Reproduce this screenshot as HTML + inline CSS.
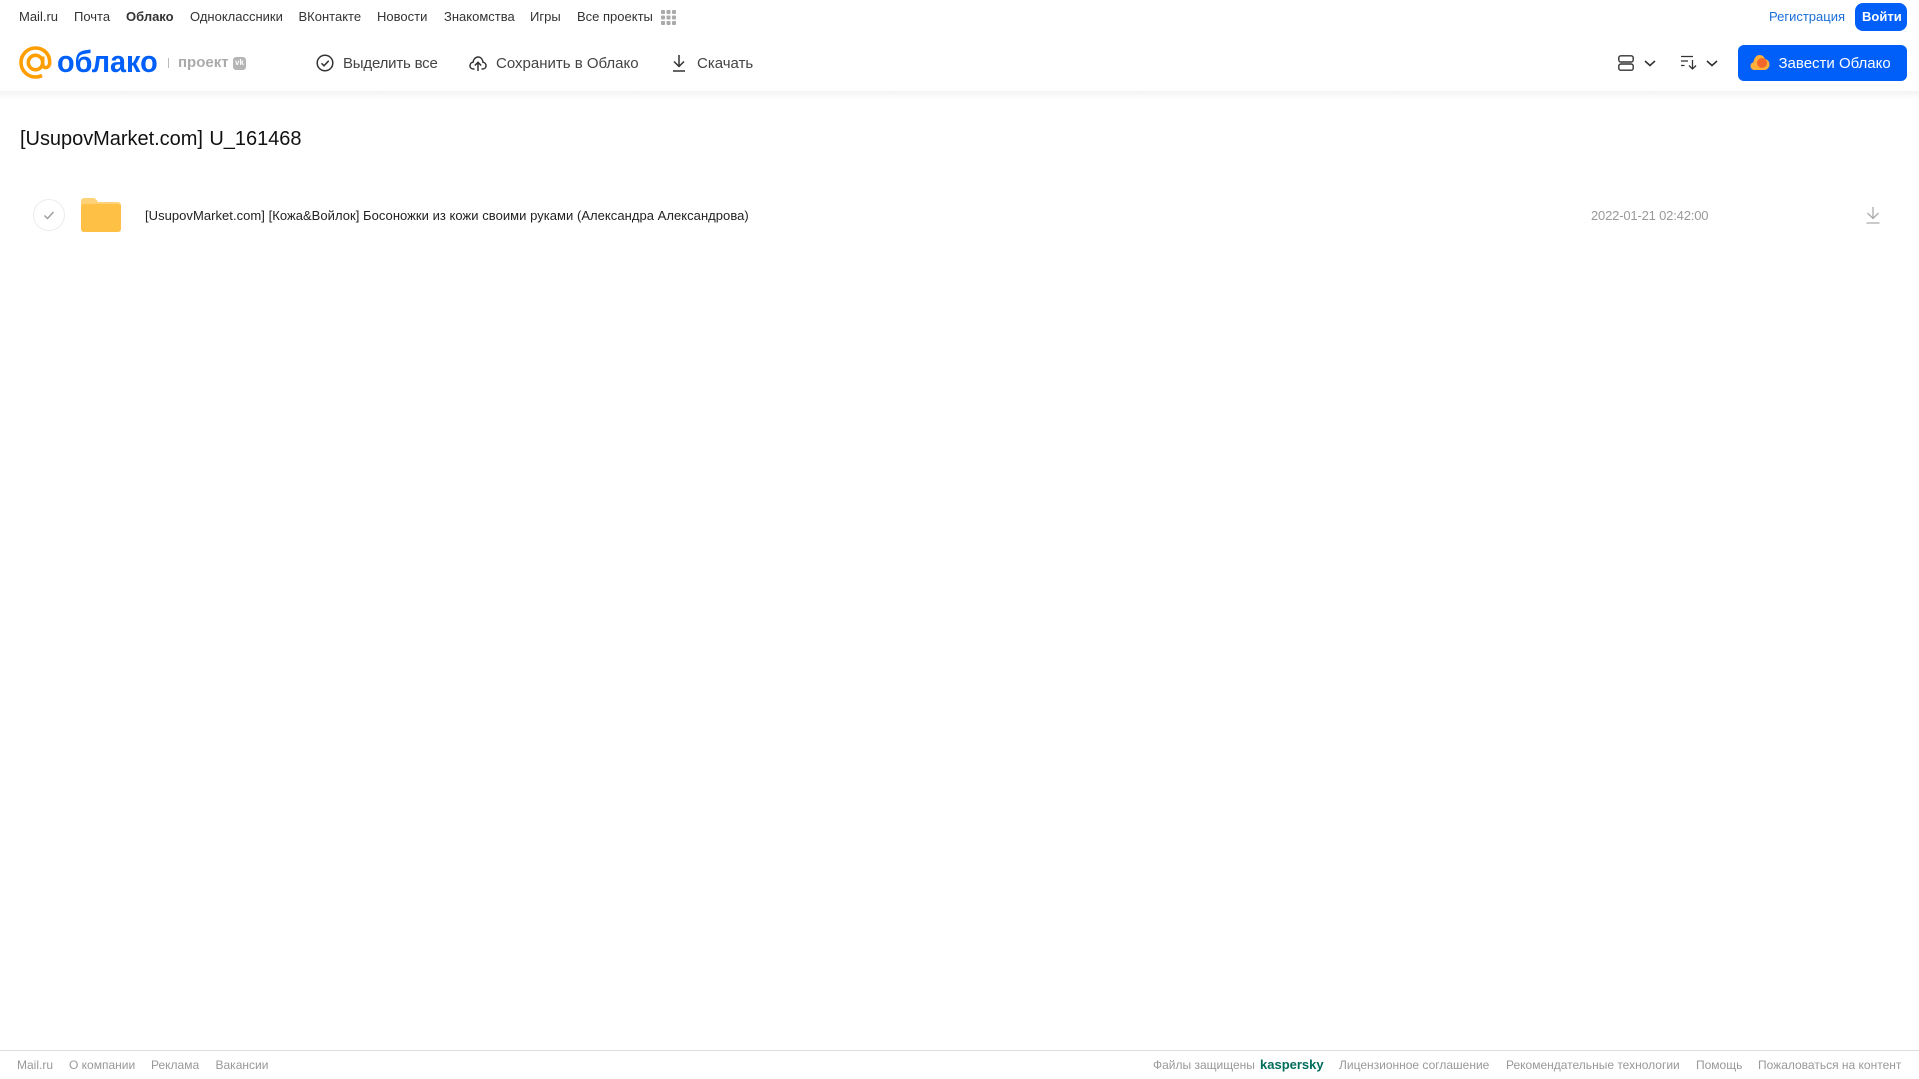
<!DOCTYPE html>
<html lang="ru"><head><meta charset="utf-8"><title>Облако</title>
<style>
html,body{margin:0;padding:0;background:#fff;width:1919px;height:1079px;overflow:hidden}
body{font-family:"Liberation Sans",Arial,sans-serif;position:relative;color:#2c2d2e}
.t{position:absolute;white-space:nowrap;line-height:20px}
.n{top:7px;font-size:13px;color:#333}
.a{top:54px;font-size:15px;color:#444}
.f{top:1055px;font-size:12px;color:#999}
svg{position:absolute;overflow:visible}
#hs{position:absolute;left:0;top:91px;width:1919px;height:8px;background:linear-gradient(#f3f3f3,#fff)}
</style></head><body>
<div id="hs"></div>
<span class="t n" style="left:19px">Mail.ru</span>
<span class="t n" style="left:74px">Почта</span>
<span class="t n" style="left:126px;font-weight:bold">Облако</span>
<span class="t n" style="left:190px">Одноклассники</span>
<span class="t n" style="left:298.500px">ВКонтакте</span>
<span class="t n" style="left:377px">Новости</span>
<span class="t n" style="left:444px">Знакомства</span>
<span class="t n" style="left:530px">Игры</span>
<span class="t n" style="left:577px">Все проекты</span>
<svg style="left:661px;top:10px" width="15" height="15" fill="#aaa"><rect width="4" height="4" rx="1"/><rect x="5.500" width="4" height="4" rx="1"/><rect x="11" width="4" height="4" rx="1"/><rect y="5.500" width="4" height="4" rx="1"/><rect x="5.500" y="5.500" width="4" height="4" rx="1"/><rect x="11" y="5.500" width="4" height="4" rx="1"/><rect y="11" width="4" height="4" rx="1"/><rect x="5.500" y="11" width="4" height="4" rx="1"/><rect x="11" y="11" width="4" height="4" rx="1"/></svg>
<span class="t n" style="left:1769px;color:#1a6ed8">Регистрация</span>
<div style="position:absolute;left:1855px;top:3px;width:52px;height:28px;border-radius:8px;background:#005ff9"></div>
<span class="t n" style="left:1862px;color:#fff;font-weight:bold;font-size:13px">Войти</span>

<svg style="left:19px;top:46px" width="33" height="33" viewBox="0 0 33 33" fill="none" stroke="#ff9e00" stroke-width="3.600"><circle cx="16.500" cy="16.500" r="7.200"/><path d="M23.700 10.500V18c0 5 6.800 5 7-1.500C30.900 8 24.500 2 16.500 2 8.500 2 2 8.500 2 16.500S8.500 31 16.500 31c2.500 0 4.500-.5 6.500-1.500"/></svg>
<span class="t" style="left:57px;top:46px;line-height:32px;font-size:31px;font-weight:bold;color:#005ff9;transform:scaleX(.93);transform-origin:0 50%">облако</span>
<div style="position:absolute;left:168px;top:58px;width:1px;height:10px;background:#bbb"></div>
<span class="t" style="left:178px;top:53px;font-size:15px;font-weight:bold;color:#aaa">проект</span>
<div style="position:absolute;left:233px;top:57px;width:13px;height:13px;border-radius:3px;background:#b5b5b5"></div>
<span class="t" style="left:235px;top:53px;font-size:8px;font-weight:bold;color:#fff">vk</span>

<svg style="left:316px;top:54px" width="18" height="18" fill="none" stroke="#333" stroke-width="1.500"><circle cx="9" cy="9" r="7.800"/><path d="M5.500 9.300l2.500 2.500 4.700-5"/></svg>
<span class="t a" style="left:343px;letter-spacing:-.2px">Выделить все</span>
<svg style="left:469px;top:54px" width="18" height="18" viewBox="0 0 18 18" fill="none" stroke="#333" stroke-width="1.500"><path d="M5.500 15H4.500C2.300 15 1 13.500 1 11.700c0-1.800 1.300-3.200 3-3.400C4.500 5.300 6.500 3 9 3c2.700 0 4.600 2.200 5 5.300 1.800.2 3 1.700 3 3.400 0 1.800-1.300 3.300-3.500 3.300h-1"/><path d="M9 17V8.500M5.800 11.500L9 8.300l3.200 3.200"/></svg>
<span class="t a" style="left:496px">Сохранить в Облако</span>
<svg style="left:672px;top:54px" width="14" height="18" viewBox="0 0 14 18" fill="none" stroke="#333" stroke-width="1.500"><path d="M7 1v11M2 7.500L7 12.500l5-5M1 17h12"/></svg>
<span class="t a" style="left:697px">Скачать</span>

<svg style="left:1618px;top:55px" width="16" height="16" fill="none" stroke="#333" stroke-width="1.400"><rect x=".8" y=".8" width="14.400" height="6.200" rx="2"/><rect x=".8" y="9" width="14.400" height="6.200" rx="2"/></svg>
<svg style="left:1644px;top:60px" width="12" height="7" fill="none" stroke="#333" stroke-width="1.600"><path d="M1 1l5 4.500L11 1"/></svg>
<svg style="left:1681px;top:55px" width="16" height="15" fill="none" stroke="#333" stroke-width="1.300"><path d="M0 1.500h12M0 6h7M0 10.500h3.500M11.500 5v9M8 10.500l3.500 3.500 3.500-3.500"/></svg>
<svg style="left:1706px;top:60px" width="12" height="7" fill="none" stroke="#333" stroke-width="1.600"><path d="M1 1l5 4.500L11 1"/></svg>
<div style="position:absolute;left:1738px;top:45px;width:169px;height:36px;border-radius:6px;background:#005ff9"></div>
<svg style="left:1750px;top:54px" width="20" height="17" viewBox="0 0 20 17"><path d="M4.500 16C2 16 .5 14 .5 12c0-2 1.300-3.500 3-3.800C4 4 6.500 1 9.500 1c2.700 0 4.700 1.700 5.500 4 2.500.3 4.500 2.500 4.500 5.500 0 3-2.300 5.500-5 5.500z" fill="#ffb03a"/><circle cx="12" cy="9" r="5" fill="#f4672a"/></svg>
<span class="t" style="left:1778.500px;top:54px;font-size:15px;color:#fff">Завести Облако</span>

<span class="t" style="left:20px;top:127px;line-height:24px;font-size:20px;color:#111;word-spacing:1px;letter-spacing:-.03px">[UsupovMarket.com] U_161468</span>

<svg style="left:33px;top:199px" width="32" height="32" fill="none"><circle cx="16" cy="16" r="15.500" stroke="#ececec"/><path d="M11.500 16.500l3 3 6-6.500" stroke="#999" stroke-width="1.300"/></svg>
<svg style="left:81px;top:198px" width="40" height="34" viewBox="0 0 40 34"><path d="M0 3a3 3 0 0 1 3-3h9c2 0 3 1 4 2.500L17 4h20a3 3 0 0 1 3 3v4H0z" fill="#ffd277"/><path d="M0 9a3 3 0 0 1 3-3h34a3 3 0 0 1 3 3v22a3 3 0 0 1-3 3H3a3 3 0 0 1-3-3z" fill="#ffc145"/></svg>
<span class="t" style="left:145px;top:206px;font-size:13px;color:#222;letter-spacing:.04px">[UsupovMarket.com] [Кожа&amp;Войлок] Босоножки из кожи своими руками (Александра Александрова)</span>
<span class="t" style="left:1591px;top:206px;font-size:13px;color:#999;letter-spacing:-.18px">2022-01-21 02:42:00</span>
<svg style="left:1866px;top:207px" width="14" height="17" viewBox="0 0 14 17" fill="none" stroke="#aaa" stroke-width="1.300"><path d="M7 0v11M1.500 6L7 11.500 12.500 6M.5 16h13"/></svg>

<div style="position:absolute;left:0;top:1050px;width:1919px;height:1px;background:#ddd"></div>
<span class="t f" style="left:17px">Mail.ru</span>
<span class="t f" style="left:69px">О компании</span>
<span class="t f" style="left:151px">Реклама</span>
<span class="t f" style="left:215.500px">Вакансии</span>
<span class="t f" style="left:1153px">Файлы защищены</span>
<span class="t f" style="left:1260px;color:#006d5c;font-weight:bold;font-size:13px">kaspersky</span>
<span class="t f" style="left:1339px">Лицензионное соглашение</span>
<span class="t f" style="left:1506px">Рекомендательные технологии</span>
<span class="t f" style="left:1696px">Помощь</span>
<span class="t f" style="left:1758px">Пожаловаться на контент</span>
</body></html>
